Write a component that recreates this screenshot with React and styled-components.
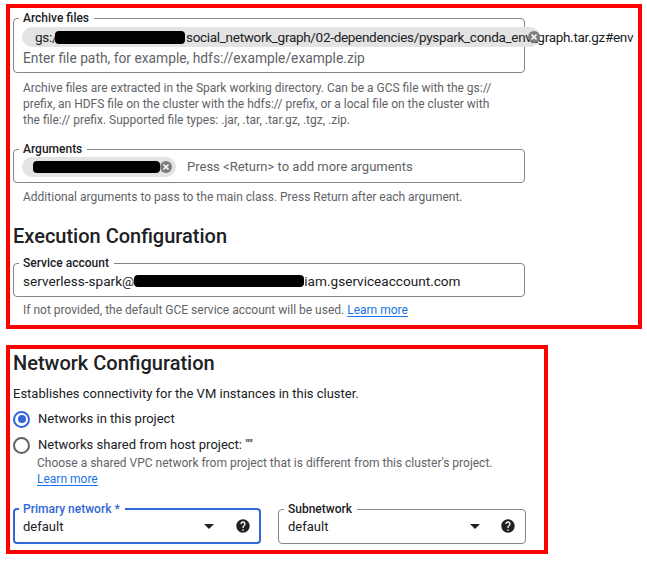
import styled, { createGlobalStyle } from 'styled-components'
import { MdArrowDropDown, MdHelp } from 'react-icons/md'

const GlobalStyle = createGlobalStyle`
  body {
    margin: 0;
    background: #fff;
    color: #202124;
    font-family: Roboto, "Liberation Sans", Arial, sans-serif;
  }
`;

const Page = styled.div`
  display: flex;
  flex-direction: column;
  align-items: flex-start;
  gap: 16px;
  padding: 4px 0 0 6px;
`;

const Panel = styled.section`
  box-sizing: border-box;
  width: ${p => p.width}px;
  height: ${p => p.height}px;
  border: 4px solid #ff0000;
  padding: ${p => p.padTop}px 0 0 3px;
  display: flex;
  flex-direction: column;
  align-items: flex-start;
`;

const Field = styled.fieldset`
  box-sizing: border-box;
  width: ${p => p.width || 512}px;
  min-width: 0;
  margin: ${p => p.top || 0}px 0 0;
  padding: 0 ${p => (p.focused ? 8 : 9)}px ${p => p.bottom}px;
  border: ${p => (p.focused ? '2px solid #3367d6' : '1px solid #80868b')};
  border-radius: 4px;
`;

const Legend = styled.legend`
  margin-left: -4px;
  padding: 0 5px 0 4px;
  font-size: 12px;
  line-height: 14px;
  font-weight: 500;
  color: ${p => (p.focused ? '#3367d6' : '#202124')};
`;

const Chip = styled.div`
  position: relative;
  box-sizing: border-box;
  display: flex;
  align-items: center;
  width: ${p => p.width}px;
  height: 20px;
  margin: ${p => p.top}px 0 0 -1px;
  padding-left: ${p => p.padLeft}px;
  border-radius: 10px;
  background: #e3e3e3;
  font-size: 13.5px;
  letter-spacing: -0.3px;
  white-space: nowrap;
`;

const ChipClose = styled.span`
  position: absolute;
  right: ${p => p.right}px;
  top: 4px;
  width: 12px;
  height: 12px;
  border-radius: 50%;
  background: #7d7d7d;
  display: flex;
  align-items: center;
  justify-content: center;
`;

const Redacted = styled.span`
  display: inline-block;
  flex: none;
  width: ${p => p.width}px;
  height: ${p => p.height || 12}px;
  margin: 0 ${p => p.right || 0}px 0 ${p => p.left || 0}px;
  border-radius: 4px;
  background: #000;
`;

const ArgRow = styled.div`
  display: flex;
  align-items: center;
  gap: 11px;
`;

const InputText = styled.div`
  display: flex;
  align-items: center;
  margin-top: ${p => p.top || 0}px;
  font-size: ${p => p.size || 14}px;
  line-height: 16px;
  white-space: nowrap;
  color: ${p => (p.muted ? '#5f6368' : '#202124')};
`;

const Helper = styled.p`
  margin: ${p => p.top}px 0 0 ${p => (p.indent ? 10 : 0)}px;
  font-size: 12px;
  line-height: 16px;
  color: #5f6368;
  white-space: nowrap;
`;

const Link = styled.a`
  color: #1a73e8;
  text-decoration: underline;
  text-underline-offset: 2px;
`;

const Heading = styled.h2`
  margin: ${p => p.top}px 0 0;
  font-size: 20px;
  line-height: 24px;
  font-weight: 500;
  color: #202124;
`;

const Body = styled.p`
  margin: ${p => p.top}px 0 0;
  font-size: 13px;
  line-height: 20px;
`;

const RadioRow = styled.label`
  display: flex;
  align-items: center;
  gap: 8px;
  margin-top: ${p => p.top}px;
  font-size: 13px;
  line-height: 20px;
`;

const RadioDot = styled.span`
  box-sizing: border-box;
  width: 17px;
  height: 17px;
  border-radius: 50%;
  border: 2px solid ${p => (p.checked ? '#3367d6' : '#5f6368')};
  display: flex;
  align-items: center;
  justify-content: center;

  &::after {
    content: '';
    display: ${p => (p.checked ? 'block' : 'none')};
    width: 8px;
    height: 8px;
    border-radius: 50%;
    background: #3367d6;
  }
`;

const SubNote = styled.div`
  margin-left: 24px;
  font-size: 12px;
  line-height: 16px;
  color: #5f6368;
`;

const SelectRow = styled.div`
  display: flex;
  gap: 17px;
  margin-top: 15px;
`;

const SelectValue = styled.div`
  display: flex;
  align-items: center;
  height: 20px;
  font-size: 13px;
  color: #202124;

  span {
    flex: 1;
  }
`;

const Icons = styled.div`
  display: flex;
  align-items: center;
  gap: ${p => p.gap}px;
  color: #202124;
`;

function CloseX() {
  return (
    <svg width="8" height="8" viewBox="0 0 8 8">
      <path d="M1.5 1.5 L6.5 6.5 M6.5 1.5 L1.5 6.5" stroke="#fff" strokeWidth="1.5" />
    </svg>
  );
}

function Select({ label, focused, width, gap }) {
  return (
    <Field width={width} focused={focused} bottom={focused ? 6 : 7}>
      <Legend focused={focused}>{label}</Legend>
      <SelectValue>
        <span>default</span>
        <Icons gap={gap}>
          <MdArrowDropDown size={24} />
          <MdHelp size={16} />
        </Icons>
      </SelectValue>
    </Field>
  );
}

export default function App() {
  return (
    <>
      <GlobalStyle />
      <Page>
        <Panel width={636} height={325} padTop={3}>
          <Field bottom={6}>
            <Legend>Archive files</Legend>
            <Chip width={518} top={2} padLeft={13}>
              gs://<Redacted width={130} height={13} left={-6} right={1} />
              social_network_graph/02-dependencies/pyspark_conda_env_graph.tar.gz#env
              <ChipClose right={0}><CloseX /></ChipClose>
            </Chip>
            <InputText top={3} size={13.8} muted>Enter file path, for example, hdfs://example/example.zip</InputText>
          </Field>
          <Helper top={7} indent>
            Archive files are extracted in the Spark working directory. Can be a GCS file with the gs://<br />
            prefix, an HDFS file on the cluster with the hdfs:// prefix, or a local file on the cluster with<br />
            the file:// prefix. Supported file types: .jar, .tar, .tar.gz, .tgz, .zip.
          </Helper>

          <Field top={14} bottom={5}>
            <Legend>Arguments</Legend>
            <ArgRow>
              <Chip width={154} top={1} padLeft={11}>
                <Redacted width={127} />
                <ChipClose right={4}><CloseX /></ChipClose>
              </Chip>
              <InputText size={13} muted>Press &lt;Return&gt; to add more arguments</InputText>
            </ArgRow>
          </Field>
          <Helper top={6} indent>Additional arguments to pass to the main class. Press Return after each argument.</Helper>

          <Heading top={19}>Execution Configuration</Heading>

          <Field top={8} bottom={7}>
            <Legend>Service account</Legend>
            <InputText top={3} size={13.6}>
              serverless-spark@<Redacted width={170} height={12} />iam.gserviceaccount.com
            </InputText>
          </Field>
          <Helper top={5} indent>
            If not provided, the default GCE service account will be used. <Link href="#">Learn more</Link>
          </Helper>
        </Panel>

        <Panel width={542} height={209} padTop={2}>
          <Heading top={0}>Network Configuration</Heading>
          <Body top={9}>Establishes connectivity for the VM instances in this cluster.</Body>
          <RadioRow top={5}>
            <RadioDot checked />
            Networks in this project
          </RadioRow>
          <RadioRow top={6}>
            <RadioDot />
            Networks shared from host project: ""
          </RadioRow>
          <SubNote>
            Choose a shared VPC network from project that is different from this cluster's project.<br />
            <Link href="#">Learn more</Link>
          </SubNote>
          <SelectRow>
            <Select label="Primary network *" focused width={248} gap={14} />
            <Select label="Subnetwork" width={248} gap={13} />
          </SelectRow>
        </Panel>
      </Page>
    </>
  );
}
